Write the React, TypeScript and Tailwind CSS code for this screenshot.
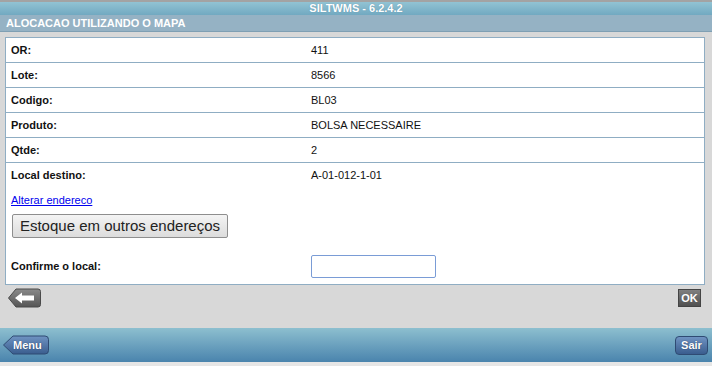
import React from "react";

const rows: [string, string][] = [
  ["OR:", "411"],
  ["Lote:", "8566"],
  ["Codigo:", "BL03"],
  ["Produto:", "BOLSA NECESSAIRE"],
  ["Qtde:", "2"],
];

export default function App() {
  return (
    <div
      className="flex h-[366px] w-[712px] flex-col bg-[#d8d8d8] text-[11px] text-[#111]"
      style={{ fontFamily: '"Liberation Sans", Arial, sans-serif' }}
    >
      {/* Top title bar */}
      <div className="flex h-[15px] shrink-0 items-center justify-center border-t-2 border-[#a3a3a3] bg-gradient-to-b from-[#92c3d3] to-[#71a9c1] font-bold text-white [text-shadow:0_0_1px_#5a8aa0]">
        SILTWMS - 6.2.4.2
      </div>
      {/* Sub header */}
      <div className="flex h-[17px] shrink-0 items-center border-b border-[#7f9fb3] bg-[#95b2c4] pl-[6px] font-bold text-white">
        ALOCACAO UTILIZANDO O MAPA
      </div>

      {/* Panel */}
      <div className="mx-[5px] mt-[5px] flex w-[700px] flex-col border border-[#8fadc3] bg-white">
        {rows.map(([l, v]) => (
          <div key={l} className="flex h-[25px] items-center border-b border-[#8fadc3]">
            <div className="w-[305px] pl-[5px] font-bold">{l}</div>
            <div>{v}</div>
          </div>
        ))}
        <div className="flex h-[25px] items-center">
          <div className="w-[305px] pl-[5px] font-bold">Local destino:</div>
          <div>A-01-012-1-01</div>
        </div>
        <div className="flex h-[24px] items-center pl-[5px]">
          <a href="#" className="text-[#0000ee] underline">
            Alterar endereco
          </a>
        </div>
        <div className="flex h-[25px] items-start pl-[6px] pt-[2px]">
          <button className="flex h-[24px] w-[216px] items-center justify-center rounded-[2px] border border-[#8e8e8e] bg-gradient-to-b from-[#f4f4f4] to-[#dcdcdc] text-[15px] text-[#222]">
            Estoque em outros endereços
          </button>
        </div>
        <div className="flex h-[42px] items-center pt-[17px]">
          <div className="w-[305px] pl-[5px] font-bold">Confirme o local:</div>
          <input className="h-[23px] w-[125px] rounded-[2px] border border-[#7a9cd6] bg-white outline-none" />
        </div>
        <div className="h-[5px]" />
      </div>

      {/* Back / OK row */}
      <div className="mt-[3px] flex items-start justify-between pl-[8px] pr-[11px]">
        <svg width="33" height="20" viewBox="0 0 33 20">
          <defs>
            <linearGradient id="bk" x1="0" y1="0" x2="0" y2="1">
              <stop offset="0" stopColor="#8a8a8a" />
              <stop offset="1" stopColor="#555555" />
            </linearGradient>
          </defs>
          <path d="M0.5 10 L8 1 H30 Q32.5 1 32.5 3.5 V16.5 Q32.5 19 30 19 H8 Z" fill="url(#bk)" stroke="#4a4a4a" />
          <path d="M7 10 L14 4.5 V7.5 H26 V12.5 H14 V15.5 Z" fill="#ffffff" />
        </svg>
        <button className="mt-[1px] flex h-[18px] w-[23px] items-center justify-center border border-[#444] bg-gradient-to-b from-[#808080] to-[#505050] text-[11px] font-bold text-white">
          OK
        </button>
      </div>

      <div className="flex-1" />

      {/* Bottom bar */}
      <div className="flex h-[34px] shrink-0 items-center justify-between bg-gradient-to-b from-[#8dbfcf] to-[#4a84ad] pl-[3px] pr-[4px]">
        <div className="relative flex h-[20px] w-[46px] items-center">
          <svg className="absolute left-0 top-0" width="46" height="20" viewBox="0 0 46 20">
            <defs>
              <linearGradient id="mn" x1="0" y1="0" x2="0" y2="1">
                <stop offset="0" stopColor="#6f93c2" />
                <stop offset="1" stopColor="#3a5d8e" />
              </linearGradient>
            </defs>
            <path d="M0.5 10 L10 1 H42 Q45.5 1 45.5 4.5 V15.5 Q45.5 19 42 19 H10 Z" fill="url(#mn)" stroke="#2f4b73" />
          </svg>
          <span className="relative ml-[10px] font-bold text-white [text-shadow:0_0_1px_#1e3557]">Menu</span>
        </div>
        <button className="flex h-[19px] w-[33px] items-center justify-center rounded-[4px] border border-[#2f4b73] bg-gradient-to-b from-[#6f93c2] to-[#3a5d8e] font-bold text-white [text-shadow:0_0_1px_#1e3557]">
          Sair
        </button>
      </div>
      <div className="h-[4px] shrink-0 bg-[#e6e6e6]" />
    </div>
  );
}
